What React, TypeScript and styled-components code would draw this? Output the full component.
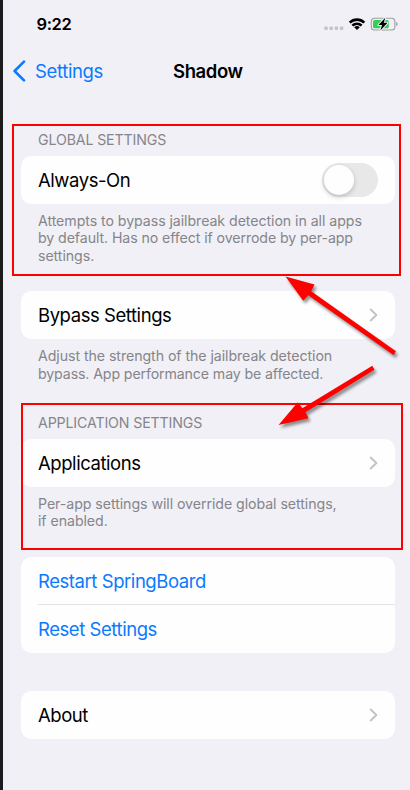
import React from "react";
import styled, { createGlobalStyle } from "styled-components";

const GlobalStyle = createGlobalStyle`
  *, *::before, *::after { box-sizing: border-box; }
  body {
    margin: 0;
    background: #f1f0f6;
    font-family: Inter, "Liberation Sans", sans-serif;
    -webkit-font-smoothing: antialiased;
  }
`;

const Screen = styled.div`
  position: relative;
  width: 410px;
  height: 790px;
  overflow: hidden;
  border-left: 3px solid #1b1a1d;
  background: #f1f0f6;
  color: #000;
`;

const StatusBar = styled.header`
  display: flex;
  align-items: center;
  justify-content: space-between;
  height: 48px;
  padding: 0 12px 0 33.5px;
`;

const Clock = styled.time`
  font-size: 16.5px;
  font-weight: 600;
  line-height: 20px;
  letter-spacing: -0.4px;
`;

const StatusIcons = styled.div`
  display: flex;
  align-items: center;
`;

const NavBar = styled.nav`
  display: grid;
  grid-template-columns: 161px 1fr;
  align-items: center;
  height: 46px;
  padding-left: 9px;
`;

const BackButton = styled.button`
  display: flex;
  align-items: center;
  gap: 9px;
  padding: 0;
  border: 0;
  background: none;
  color: #0a7aff;
  font: inherit;
  font-size: 18.5px;
  line-height: 24px;
  letter-spacing: -0.35px;
`;

const Title = styled.h1`
  margin: 0;
  font-size: 18.5px;
  font-weight: 600;
  line-height: 24px;
  letter-spacing: -0.4px;
`;

const Section = styled.section<{ $top: number }>`
  margin: ${(p) => p.$top}px 15px 0 18px;
`;

const Caption = styled.h2`
  margin: 0;
  padding: 0 17px 6px;
  color: #85858a;
  font-size: 14.2px;
  font-weight: 400;
  line-height: 20px;
  letter-spacing: -0.14px;
`;

const Card = styled.div`
  border-radius: 10.5px;
  background: #fefefe;
`;

const Row = styled.div<{ $divided?: boolean }>`
  position: relative;
  display: flex;
  align-items: center;
  justify-content: space-between;
  height: 48px;
  padding: 0 17px;

  &::after {
    content: "";
    display: ${(p) => (p.$divided ? "block" : "none")};
    position: absolute;
    left: 17px;
    right: 0;
    bottom: 0;
    height: 1px;
    background: #e3e3e6;
  }
`;

const Label = styled.span<{ $link?: boolean }>`
  color: ${(p) => (p.$link ? "#0a7aff" : "#000")};
  font-size: 18.5px;
  line-height: 24px;
  letter-spacing: -0.44px;
`;

const Footnote = styled.p`
  margin: 0;
  padding: 8px 0 0 17px;
  color: #85858a;
  font-size: 14.2px;
  line-height: 17.4px;
`;

const Line = styled.span<{ $spacing?: number }>`
  display: block;
  white-space: nowrap;
  letter-spacing: ${(p) => p.$spacing ?? -0.07}px;
`;

const Switch = styled.button`
  display: flex;
  width: 56px;
  height: 34px;
  padding: 2px;
  border: 0;
  border-radius: 17px;
  background: #e8e8e9;
`;

const Knob = styled.span`
  width: 30px;
  height: 30px;
  border-radius: 50%;
  background: #fefefe;
  box-shadow: 0 2px 5px rgba(0, 0, 0, 0.2);
`;

const Highlight = styled.div<{ $x: number; $y: number; $w: number; $h: number }>`
  position: absolute;
  left: ${(p) => p.$x}px;
  top: ${(p) => p.$y}px;
  width: ${(p) => p.$w}px;
  height: ${(p) => p.$h}px;
  border: 2px solid #fe0000;
  pointer-events: none;
`;

const ArrowLayer = styled.svg`
  position: absolute;
  left: 267px;
  top: 265px;
  pointer-events: none;
  filter: drop-shadow(2px 3px 1.5px rgba(0, 0, 0, 0.42));
`;

const StatusGlyphs = () => (
  <svg width="76" height="20" viewBox="322 14 76 20" aria-hidden="true">
    <g fill="#c3c3c8">
      <rect x="324.2" y="26.6" width="3.6" height="3.4" rx="1.2" />
      <rect x="329.4" y="26.6" width="3.6" height="3.4" rx="1.2" />
      <rect x="334.6" y="26.6" width="3.6" height="3.4" rx="1.2" />
      <rect x="339.8" y="26.6" width="3.6" height="3.4" rx="1.2" />
    </g>
    <g fill="none" stroke="#000" strokeWidth="2.6">
      <path d="M349.7 22.7 A10.2 10.2 0 0 1 364.3 22.7" />
      <path d="M352.4 25.7 A6.4 6.4 0 0 1 361.6 25.7" />
    </g>
    <path d="M357 30 L354.2 27.3 A4 4 0 0 1 359.8 27.3 Z" fill="#000" />
    <rect x="371.3" y="18.3" width="23.6" height="11.7" rx="3.3" fill="none" stroke="#9d9da2" strokeWidth="1.1" />
    <path d="M396.2 22 q1.5 .5 1.5 2.1 t-1.5 2.1z" fill="#9d9da2" />
    <rect x="373" y="20" width="15.8" height="8.3" rx="1.6" fill="#34ce5b" />
    <path
      d="M385.3 17.8 L378.4 25.1 H382 L380.4 30.4 L387.5 22.8 H383.8 Z"
      fill="#000"
      stroke="#f1f0f6"
      strokeWidth="2"
      strokeLinejoin="round"
      paintOrder="stroke"
    />
  </svg>
);

const BackChevron = () => (
  <svg width="14" height="22" viewBox="0 0 14 22" fill="none" aria-hidden="true">
    <path d="M12 1.6 L2.6 11 L12 20.4" stroke="#0a7aff" strokeWidth="2.6" strokeLinecap="round" strokeLinejoin="round" />
  </svg>
);

const Chevron = () => (
  <svg width="9" height="14" viewBox="0 0 9 14" fill="none" aria-hidden="true">
    <path d="M1.7 1.5 L7.4 7 L1.7 12.5" stroke="#c3c3c6" strokeWidth="1.9" strokeLinecap="round" strokeLinejoin="round" />
  </svg>
);

const Arrows = () => (
  <ArrowLayer width="140" height="175" viewBox="270 265 140 175" fill="#fe0000" aria-hidden="true">
    <path d="M285.5 276.5 L314.5 284.5 L311.2 291.2 L396 351.3 L393.5 355 L308.2 295.2 L303.3 300.7 Z" />
    <path d="M278.5 425 L297.8 402.3 L302.3 408.2 L372.3 365.7 L374.5 369.7 L305.5 412.2 L308.5 418.3 Z" />
  </ArrowLayer>
);

export default function App() {
  return (
    <>
      <GlobalStyle />
      <Screen>
        <StatusBar>
          <Clock>9:22</Clock>
          <StatusIcons>
            <StatusGlyphs />
          </StatusIcons>
        </StatusBar>
        <NavBar>
          <BackButton>
            <BackChevron />
            Settings
          </BackButton>
          <Title>Shadow</Title>
        </NavBar>

        <Section $top={36}>
          <Caption>GLOBAL SETTINGS</Caption>
          <Card>
            <Row>
              <Label>Always-On</Label>
              <Switch role="switch" aria-checked={false} aria-label="Always-On">
                <Knob />
              </Switch>
            </Row>
          </Card>
          <Footnote>
            <Line>Attempts to bypass jailbreak detection in all apps</Line>
            <Line $spacing={-0.1}>by default. Has no effect if overrode by per-app</Line>
            <Line>settings.</Line>
          </Footnote>
        </Section>

        <Section $top={27}>
          <Card>
            <Row>
              <Label>Bypass Settings</Label>
              <Chevron />
            </Row>
          </Card>
          <Footnote>
            <Line>Adjust the strength of the jailbreak detection</Line>
            <Line $spacing={-0.13}>bypass. App performance may be affected.</Line>
          </Footnote>
        </Section>

        <Section $top={31}>
          <Caption>APPLICATION SETTINGS</Caption>
          <Card>
            <Row>
              <Label>Applications</Label>
              <Chevron />
            </Row>
          </Card>
          <Footnote>
            <Line>Per-app settings will override global settings,</Line>
            <Line>if enabled.</Line>
          </Footnote>
        </Section>

        <Section $top={27}>
          <Card>
            <Row $divided>
              <Label $link>Restart SpringBoard</Label>
            </Row>
            <Row>
              <Label $link>Reset Settings</Label>
            </Row>
          </Card>
        </Section>

        <Section $top={38}>
          <Card>
            <Row>
              <Label>About</Label>
              <Chevron />
            </Row>
          </Card>
        </Section>

        <Highlight $x={9} $y={124} $w={389} $h={152} />
        <Highlight $x={18} $y={403} $w={382} $h={147} />
        <Arrows />
      </Screen>
    </>
  );
}
